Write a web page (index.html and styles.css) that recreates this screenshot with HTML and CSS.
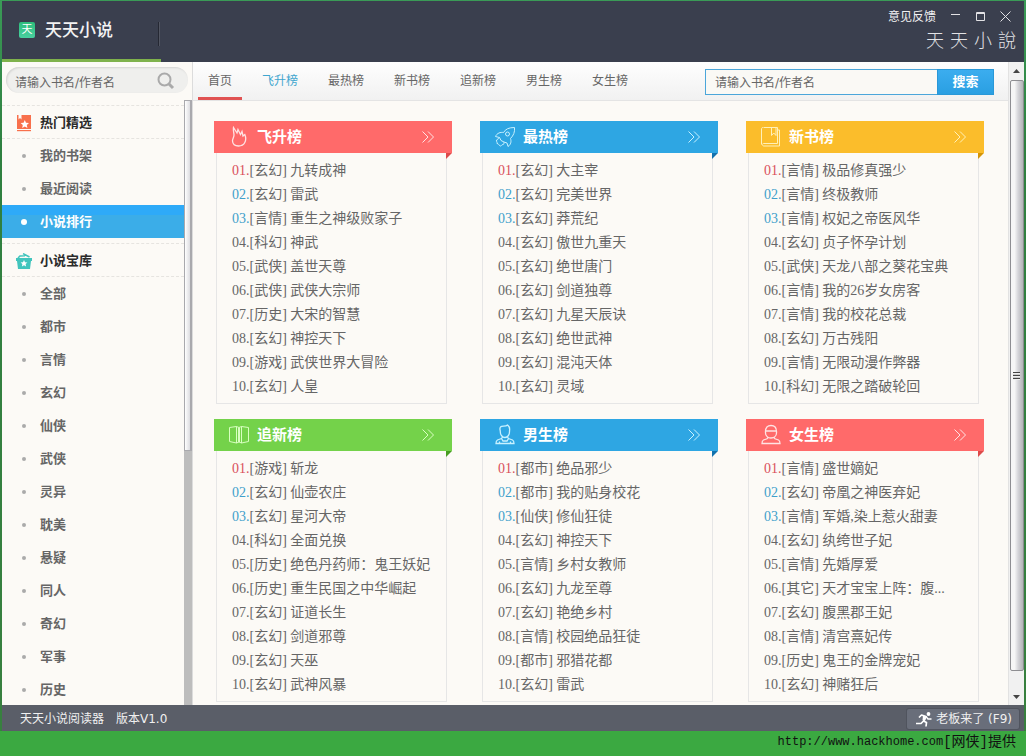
FILE: index.html
```html
<!DOCTYPE html>
<html lang="zh-CN">
<head>
<meta charset="utf-8">
<title>天天小说</title>
<link rel="stylesheet" href="styles.css">
</head>
<body>
<div class="app">
  <header class="titlebar">
    <div class="brand">
      <span class="brand-icon">天</span>
      <h1 class="brand-name">天天小说</h1>
    </div>
    <div class="title-right">
      <div class="window-tools">
        <a class="feedback" href="#">意见反馈</a>
        <button class="win-btn" aria-label="最小化"><svg width="11" height="11" viewBox="0 0 11 11"><path d="M1 3.5h9"/></svg></button>
        <button class="win-btn" aria-label="最大化"><svg width="11" height="11" viewBox="0 0 11 11"><path d="M1.5 1.5h8v8h-8zM1 2.5h9"/></svg></button>
        <button class="win-btn" aria-label="关闭"><svg width="11" height="11" viewBox="0 0 11 11"><path d="M.5 .5l10 10M10.500 .5l-10 10"/></svg></button>
      </div>
      <div class="seal"><span>天</span><span>天</span><span>小</span><span>說</span></div>
    </div>
  </header>

  <div class="body">
    <aside class="sidebar">
      <form class="side-search">
        <input class="side-input" type="text" aria-label="搜索小说" placeholder="请输入书名/作者名">
        <button class="side-submit" type="button" aria-label="查找"><svg width="18" height="18" viewBox="0 0 18 18"><circle cx="7.500" cy="7.500" r="6"/><path d="M12 12l4 4" stroke-width="3"/></svg></button>
      </form>
      <div class="side-scroll">
        <nav class="menu">
          <h2 class="menu-head"><svg class="menu-icon" width="16" height="17" viewBox="0 0 16 17"><path fill="#f8704c" d="M1 0h1.500v4.500L4 3l1.500 1.500V0H15v14H1z"/><path fill="#f8704c" d="M1 15h14v1.200H1z"/><path fill="#fff" d="M8.800 5l1.200 2.800 3 .3-2.200 2 .6 3-2.600-1.600-2.600 1.600.6-3-2.200-2 3-.3z"/></svg>热门精选</h2>
          <ul class="menu-list">
            <li><a class="menu-item" href="#">我的书架</a></li>
            <li><a class="menu-item" href="#">最近阅读</a></li>
            <li><a class="menu-item active" href="#">小说排行</a></li>
          </ul>
          <h2 class="menu-head"><svg class="menu-icon" width="16" height="17" viewBox="0 0 16 17"><path fill="#42c5bd" d="M0 5h16v3h-1l-1 8H2L1 8H0z"/><path fill="none" stroke="#42c5bd" stroke-width="1.600" d="M2 5l2-2 5-.2M7 .6L13.500 4"/><path fill="#fff" d="M8 7l1 2.200 2.400.2-1.800 1.600.5 2.400L8 12.200l-2.100 1.200.5-2.400-1.800-1.600L7 9.200z"/></svg>小说宝库</h2>
          <ul class="menu-list">
            <li><a class="menu-item" href="#">全部</a></li>
            <li><a class="menu-item" href="#">都市</a></li>
            <li><a class="menu-item" href="#">言情</a></li>
            <li><a class="menu-item" href="#">玄幻</a></li>
            <li><a class="menu-item" href="#">仙侠</a></li>
            <li><a class="menu-item" href="#">武侠</a></li>
            <li><a class="menu-item" href="#">灵异</a></li>
            <li><a class="menu-item" href="#">耽美</a></li>
            <li><a class="menu-item" href="#">悬疑</a></li>
            <li><a class="menu-item" href="#">同人</a></li>
            <li><a class="menu-item" href="#">奇幻</a></li>
            <li><a class="menu-item" href="#">军事</a></li>
            <li><a class="menu-item" href="#">历史</a></li>
          </ul>
        </nav>
        <div class="side-bar"><div class="side-thumb"></div></div>
      </div>
    </aside>

    <main class="main">
      <div class="topnav">
        <nav class="tabs">
          <a class="tab current" href="#">首页</a>
          <a class="tab hover" href="#">飞升榜</a>
          <a class="tab" href="#">最热榜</a>
          <a class="tab" href="#">新书榜</a>
          <a class="tab" href="#">追新榜</a>
          <a class="tab" href="#">男生榜</a>
          <a class="tab" href="#">女生榜</a>
        </nav>
        <form class="search">
          <input class="search-input" type="text" aria-label="书名或作者名" placeholder="请输入书名/作者名">
          <button class="search-btn" type="button">搜索</button>
        </form>
      </div>

      <div class="cards">
        <section class="card red">
          <h2 class="card-head"><svg class="card-icon bold" width="22" height="22" viewBox="0 0 22 22"><path d="M5.500 1.500L9 7l1-3.500 2.500 5 1.500-3 1 4.500 1.800-1.500c1 2.500 1.400 5.500 0 8-1.300 2.500-3.800 3.500-6.300 3.500-3.300 0-5.800-2-6-5-.1-2 1.500-3.500 1.500-6 0-2-1-4.500-.5-7.500z"/></svg>飞升榜<a class="more" href="#" aria-label="更多"><svg width="12" height="12" viewBox="0 0 12 12"><path d="M.5 .5l5.500 5.500-5.500 5.500M6 .5l5.500 5.500L6 11.500"/></svg></a></h2>
          <ol class="books">
            <li><span class="no first">01.</span>[玄幻] 九转成神</li>
            <li><span class="no top">02.</span>[玄幻] 雷武</li>
            <li><span class="no top">03.</span>[言情] 重生之神级败家子</li>
            <li><span class="no">04.</span>[科幻] 神武</li>
            <li><span class="no">05.</span>[武侠] 盖世天尊</li>
            <li><span class="no">06.</span>[武侠] 武侠大宗师</li>
            <li><span class="no">07.</span>[历史] 大宋的智慧</li>
            <li><span class="no">08.</span>[玄幻] 神控天下</li>
            <li><span class="no">09.</span>[游戏] 武侠世界大冒险</li>
            <li><span class="no">10.</span>[玄幻] 人皇</li>
          </ol>
        </section>

        <section class="card blue">
          <h2 class="card-head"><svg class="card-icon" width="22" height="22" viewBox="0 0 22 22"><path d="M20.500 1.500c-5.500 0-9 1.500-11 5-3-.5-6.500.5-8 4l4 1 1.500 3 3 1.500 3 1 1 3.500c3-2 3.500-5 2.500-8 3-3 4.500-6.500 4-11zM5.500 11.500c-2 .5-1 2.500-3 2.500-.5 1.500 1 2 .5 3.500 2 0 1.500 2 3.500 2.500 1 0 1-1.500 2.500-1.500 1 0 1-1.500 1-2.500"/><circle cx="13.500" cy="8" r="2"/></svg>最热榜<a class="more" href="#" aria-label="更多"><svg width="12" height="12" viewBox="0 0 12 12"><path d="M.5 .5l5.500 5.500-5.500 5.500M6 .5l5.500 5.500L6 11.500"/></svg></a></h2>
          <ol class="books">
            <li><span class="no first">01.</span>[玄幻] 大主宰</li>
            <li><span class="no top">02.</span>[玄幻] 完美世界</li>
            <li><span class="no top">03.</span>[玄幻] 莽荒纪</li>
            <li><span class="no">04.</span>[玄幻] 傲世九重天</li>
            <li><span class="no">05.</span>[玄幻] 绝世唐门</li>
            <li><span class="no">06.</span>[玄幻] 剑道独尊</li>
            <li><span class="no">07.</span>[玄幻] 九星天辰诀</li>
            <li><span class="no">08.</span>[玄幻] 绝世武神</li>
            <li><span class="no">09.</span>[玄幻] 混沌天体</li>
            <li><span class="no">10.</span>[玄幻] 灵域</li>
          </ol>
        </section>

        <section class="card yellow">
          <h2 class="card-head"><svg class="card-icon" width="22" height="22" viewBox="0 0 22 22"><path d="M3.500 1.500h14v16h-14c-1 0-1.500 1-1 1.700.3.600.7.800 1.200.8h15.800v-16h-2M1.500 18.500V3c0-1 .5-1.500 1.500-1.500M11.500 1.500v8l2.300-2.500L16 9.500v-8"/></svg>新书榜<a class="more" href="#" aria-label="更多"><svg width="12" height="12" viewBox="0 0 12 12"><path d="M.5 .5l5.500 5.500-5.500 5.500M6 .5l5.500 5.500L6 11.500"/></svg></a></h2>
          <ol class="books">
            <li><span class="no first">01.</span>[言情] 极品修真强少</li>
            <li><span class="no top">02.</span>[言情] 终极教师</li>
            <li><span class="no top">03.</span>[言情] 权妃之帝医风华</li>
            <li><span class="no">04.</span>[玄幻] 贞子怀孕计划</li>
            <li><span class="no">05.</span>[武侠] 天龙八部之葵花宝典</li>
            <li><span class="no">06.</span>[言情] 我的26岁女房客</li>
            <li><span class="no">07.</span>[言情] 我的校花总裁</li>
            <li><span class="no">08.</span>[玄幻] 万古残阳</li>
            <li><span class="no">09.</span>[言情] 无限动漫作弊器</li>
            <li><span class="no">10.</span>[科幻] 无限之踏破轮回</li>
          </ol>
        </section>

        <section class="card green">
          <h2 class="card-head"><svg class="card-icon" width="22" height="22" viewBox="0 0 22 22"><path d="M1.500 3.500l7-1 2.500 1 2.500-1 7 1v14l-7 1.500-2.500-1-2.500 1-7-1.500zM8.500 2.500V19M13.500 2.500V19M10.500 3.500V18M11.500 3.500V18"/></svg>追新榜<a class="more" href="#" aria-label="更多"><svg width="12" height="12" viewBox="0 0 12 12"><path d="M.5 .5l5.500 5.500-5.500 5.500M6 .5l5.500 5.500L6 11.500"/></svg></a></h2>
          <ol class="books">
            <li><span class="no first">01.</span>[游戏] 斩龙</li>
            <li><span class="no top">02.</span>[玄幻] 仙壶农庄</li>
            <li><span class="no top">03.</span>[玄幻] 星河大帝</li>
            <li><span class="no">04.</span>[科幻] 全面兑换</li>
            <li><span class="no">05.</span>[历史] 绝色丹药师：鬼王妖妃</li>
            <li><span class="no">06.</span>[历史] 重生民国之中华崛起</li>
            <li><span class="no">07.</span>[玄幻] 证道长生</li>
            <li><span class="no">08.</span>[玄幻] 剑道邪尊</li>
            <li><span class="no">09.</span>[玄幻] 天巫</li>
            <li><span class="no">10.</span>[玄幻] 武神风暴</li>
          </ol>
        </section>

        <section class="card blue">
          <h2 class="card-head"><svg class="card-icon bold" width="22" height="22" viewBox="0 0 22 22"><path d="M6.500 3c1.500-1.500 5 0 7-2 2 1.500 2.500 3.500 2 6 .3 4-2 6.500-4.500 6.500S6 11 6.300 7C5.800 5.500 5.800 4 6.500 3zM8.500 13L7.500 14.500 3.500 16C2.200 16.700 2 18 2 19.500h18c0-1.500-.2-2.800-1.500-3.500l-4-1.500-1-1.500M7.500 14.500l1.500 2.500h4l1.500-2.500M5.500 17.500v2M16.500 17.500v2"/></svg>男生榜<a class="more" href="#" aria-label="更多"><svg width="12" height="12" viewBox="0 0 12 12"><path d="M.5 .5l5.500 5.500-5.500 5.500M6 .5l5.500 5.500L6 11.500"/></svg></a></h2>
          <ol class="books">
            <li><span class="no first">01.</span>[都市] 绝品邪少</li>
            <li><span class="no top">02.</span>[都市] 我的贴身校花</li>
            <li><span class="no top">03.</span>[仙侠] 修仙狂徒</li>
            <li><span class="no">04.</span>[玄幻] 神控天下</li>
            <li><span class="no">05.</span>[言情] 乡村女教师</li>
            <li><span class="no">06.</span>[玄幻] 九龙至尊</li>
            <li><span class="no">07.</span>[玄幻] 艳绝乡村</li>
            <li><span class="no">08.</span>[言情] 校园绝品狂徒</li>
            <li><span class="no">09.</span>[都市] 邪猎花都</li>
            <li><span class="no">10.</span>[玄幻] 雷武</li>
          </ol>
        </section>

        <section class="card red">
          <h2 class="card-head"><svg class="card-icon bold" width="22" height="22" viewBox="0 0 22 22"><path d="M5.500 7.500C5.500 3.500 7.500 1.500 11 1.500s5.500 2 5.500 6v1.500c0 3-2.500 5-5.500 5s-5.500-2-5.500-5zM5.500 7h11M8 13.500l-1 1.300-3.500 1.200c-1.200.5-1.500 1.500-1.500 3.500h18c0-2-.3-3-1.500-3.500L15 14.800l-1-1.300"/></svg>女生榜<a class="more" href="#" aria-label="更多"><svg width="12" height="12" viewBox="0 0 12 12"><path d="M.5 .5l5.500 5.500-5.500 5.500M6 .5l5.500 5.500L6 11.500"/></svg></a></h2>
          <ol class="books">
            <li><span class="no first">01.</span>[言情] 盛世嫡妃</li>
            <li><span class="no top">02.</span>[玄幻] 帝凰之神医弃妃</li>
            <li><span class="no top">03.</span>[言情] 军婚,染上惹火甜妻</li>
            <li><span class="no">04.</span>[玄幻] 纨绔世子妃</li>
            <li><span class="no">05.</span>[言情] 先婚厚爱</li>
            <li><span class="no">06.</span>[其它] 天才宝宝上阵：腹...</li>
            <li><span class="no">07.</span>[玄幻] 腹黑郡王妃</li>
            <li><span class="no">08.</span>[言情] 清宫熹妃传</li>
            <li><span class="no">09.</span>[历史] 鬼王的金牌宠妃</li>
            <li><span class="no">10.</span>[玄幻] 神赌狂后</li>
          </ol>
        </section>
      </div>
    </main>

    <div class="scrollbar">
      <svg class="arrow" width="7" height="4" viewBox="0 0 7 4"><path d="M0 4L3.500 0 7 4z"/></svg>
      <div class="thumb"><span class="grip"></span></div>
      <svg class="arrow" width="7" height="4" viewBox="0 0 7 4"><path d="M0 0l3.500 4L7 0z"/></svg>
    </div>
  </div>

  <footer class="statusbar">
    <span class="app-name">天天小说阅读器</span><span>版本V1.0</span>
    <button class="boss"><svg width="16" height="15" viewBox="0 0 16 15"><circle cx="12.500" cy="2" r="1.900" fill="#fff"/><path fill="none" stroke="#fff" stroke-width="1.700" stroke-linejoin="round" d="M3 5.500L5.500 3l4.500 1.500-2.500 4.500 3 1.500-.5 4M7.500 9L5 11.500H0"/><path fill="none" stroke="#fff" stroke-width="1.400" d="M10 4.500l2 2.500h3.500"/><path fill="#fff" d="M7 3.500l3.500 1L9 9 6.500 8z"/></svg>老板来了 (F9)</button>
  </footer>
</div>
<div class="credit"><span class="url">http://www.hackhome.com</span><span>[网侠]提供</span></div>
</body>
</html>
```

FILE: styles.css
```css
* { box-sizing: border-box; }
html, body { height: 100%; }
body {
  margin: 0;
  display: flex;
  flex-direction: column;
  overflow: hidden;
  background: #3ba941;
  color: #666;
  font: 12px/16px "DejaVu Sans", "Noto Sans CJK SC", sans-serif;
}
h1, h2, ul, ol { margin: 0; padding: 0; font-weight: normal; list-style: none; }
a { color: inherit; text-decoration: none; }
button { border: 0; padding: 0; background: none; color: inherit; font: inherit; }
input { font: inherit; color: #666; outline: 0; min-width: 0; }
input::placeholder { color: #666; opacity: 1; }
svg { display: block; flex: none; }

.app {
  flex: 1;
  min-height: 0;
  display: flex;
  flex-direction: column;
  padding: 1px 2px 0;
  background: linear-gradient(#3a9b57, #2f8040 20%, #38803f);
}

/* title bar */
.titlebar {
  flex: none;
  display: flex;
  justify-content: space-between;
  height: 61px;
  background: #3a3f4e;
  color: #f2f2f2;
}
.brand {
  position: relative;
  display: flex;
  align-items: center;
  gap: 10px;
  width: 159px;
  padding: 0 0 0 17px;
  border-bottom: 3px solid #7fb24c;
}
.brand::after {
  content: "";
  position: absolute;
  right: 1px;
  top: 21px;
  width: 2px;
  height: 24px;
  background: linear-gradient(90deg, #252833 50%, #525662 50%);
}
.brand-icon {
  width: 16px;
  height: 16px;
  border-radius: 2px;
  background: linear-gradient(#2ebd7c, #49d0a0);
  color: #fff;
  font-size: 11px;
  line-height: 16px;
  text-align: center;
}
.brand-name { font-size: 17px; line-height: 24px; font-weight: 500; }
.title-right {
  display: flex;
  flex-direction: column;
  align-items: flex-end;
  padding: 6px 8px 0 0;
}
.window-tools { display: flex; align-items: center; gap: 14px; padding-right: 5px; }
.feedback { padding-top: 2px; }
.win-btn svg { fill: none; stroke: #e2e2e5; stroke-width: 1; }
.seal {
  display: flex;
  gap: 6px;
  padding-top: 4px;
  font-size: 18px;
  line-height: 24px;
  font-weight: 300;
  color: #e2e3e6;
}

/* body */
.body { flex: 1; min-height: 0; display: flex; background: #fcfaf6; }

.sidebar {
  flex: none;
  display: flex;
  flex-direction: column;
  width: 191px;
  border-right: 1px solid #dcdcdc;
}
.side-search {
  flex: none;
  display: flex;
  align-items: center;
  height: 26px;
  margin: 5px 4px 7px;
  padding: 2px 13px 0 9px;
  border-radius: 13px;
  background: #efefed;
  box-shadow: inset 1px 1px 2px #d4d4d2;
}
.side-input { flex: 1; border: 0; padding: 3px 0 0; background: none; }
.side-submit svg { fill: none; stroke: #aaa; stroke-width: 2; }
.side-scroll { flex: 1; min-height: 0; display: flex; }
.menu { flex: 1; overflow: hidden; }
.menu-head {
  display: flex;
  align-items: center;
  gap: 8px;
  height: 34px;
  margin-top: 5px;
  padding: 2px 0 0 14px;
  border: dashed #e6e4e0;
  border-width: 1px 0;
  color: #2b2b2b;
  font-size: 13px;
  font-weight: bold;
}
.menu-item {
  display: flex;
  align-items: center;
  height: 33px;
  padding: 1px 0 0 20px;
  font-size: 13px;
  font-weight: bold;
}
.menu-item::before {
  content: "";
  width: 4px;
  height: 4px;
  margin-right: 14px;
  border-radius: 50%;
  background: #aaa;
}
.menu-item.active {
  background: linear-gradient(#2eaaf8 30%, #3bade8 30%);
  color: #fff;
}
.menu-item.active::before { background: #fff; box-shadow: 0 0 0 1px #fff; }
.side-bar {
  flex: none;
  width: 8px;
  background: #bdbdbd;
}
.side-thumb {
  height: 58%;
  border: 1px solid #a9a9ad;
  border-right-width: 2px;
  background: linear-gradient(90deg, #fff, #dcdce0);
}

/* content */
.main { flex: 1; min-width: 0; overflow: hidden; }
.topnav {
  display: flex;
  justify-content: space-between;
  height: 39px;
  padding: 0 14px 0 5px;
  border-bottom: 1px solid #e4e4e4;
  background: linear-gradient(#fefefe, #f1f1f1);
}
.tabs { display: flex; gap: 10px; }
.tab {
  padding: 11px 10px 8px;
  border-bottom: 3px solid transparent;
  white-space: nowrap;
}
.tab.current { border-color: #e05252; }
.tab.hover { color: #3fa6cf; }
.search { display: flex; height: 26px; margin-top: 7px; }
.search-input {
  width: 232px;
  padding: 2px 9px 0;
  border: 1px solid #4ba6da;
  border-right: 0;
  background: #faf9f5;
}
.search-btn {
  width: 57px;
  background: linear-gradient(#3badef, #2a9fe2);
  border: 1px solid #2998d8;
  color: #fff;
  font-size: 13px;
  font-weight: bold;
}

.cards {
  display: grid;
  grid-template-columns: repeat(3, minmax(0, 1fr));
  gap: 15px 28px;
  padding: 20px 24px 3px 21px;
}
.card { --tone: #ff6a6a; --fold: #dc4a4a; --ink: #ffe3e3; }
.card.blue { --tone: #2ea6e3; --fold: #1272ae; --ink: #c8f1ff; }
.card.yellow { --tone: #fbbd2b; --fold: #d49508; --ink: #fff0b8; }
.card.green { --tone: #74d24a; --fold: #479c22; --ink: #d8ffc0; }
.card-head {
  position: relative;
  display: flex;
  align-items: center;
  gap: 7px;
  height: 32px;
  padding: 0 18px 0 14px;
  background: var(--tone);
  color: #fff;
  font-size: 15px;
  line-height: 20px;
  font-weight: bold;
}
.card-head::after {
  content: "";
  position: absolute;
  right: 0;
  top: 100%;
  border-top: 6px solid var(--fold);
  border-right: 6px solid transparent;
}
.card-icon { fill: none; stroke: var(--ink); stroke-width: 1; }
.card-icon.bold { stroke-width: 1.3; }
.more { margin-left: auto; }
.more svg { fill: none; stroke: var(--ink); stroke-width: 1; }
.books {
  margin: 0 5px 0 2px;
  padding: 6px 0 4px 15px;
  border: 1px solid #e6e6e6;
  border-top: 0;
  font-family: "Liberation Serif", "Noto Sans CJK SC", sans-serif;
  font-size: 14px;
  line-height: 24px;
}
.books li { height: 24px; white-space: nowrap; overflow: hidden; }
.no.first { color: #d9505c; }
.no.top { color: #3f9fcb; }

/* main scrollbar */
.scrollbar {
  flex: none;
  display: flex;
  flex-direction: column;
  align-items: center;
  gap: 7px;
  width: 16px;
  padding: 7px 0 6px;
  border-left: 1px solid #e2e2e2;
  background: #f1f1f1;
}
.arrow { fill: #444; }
.thumb {
  flex: 1;
  display: flex;
  align-items: center;
  justify-content: center;
  width: 14px;
  margin-bottom: 17px;
  border: 1px solid #8e8e92;
  border-radius: 2px;
  background: linear-gradient(90deg, #f6f6f6 30%, #d4d4d8 60%, #b4b4b8);
}
.grip {
  width: 7px;
  height: 8px;
  background: repeating-linear-gradient(#444 0 1px, #eee 1px 2px, #ccc 2px 3px);
}

/* status bar */
.statusbar {
  flex: none;
  display: flex;
  align-items: center;
  gap: 12px;
  height: 26px;
  padding: 2px 5px 0 18px;
  background: #5a5e68;
  color: #f0f0f0;
}
.boss {
  display: flex;
  align-items: center;
  gap: 4px;
  height: 20px;
  margin-left: auto;
  padding: 0 7px 0 9px;
  border-radius: 2px;
  background: #696e7a;
  box-shadow: 0 0 0 1px #50545e;
}
.credit {
  flex: none;
  display: flex;
  align-items: center;
  justify-content: flex-end;
  height: 25px;
  padding: 0 10px 4px 0;
  color: #111;
  font-family: "Liberation Mono", "Noto Sans CJK SC", monospace;
  font-size: 14px;
}
.url { font-size: 12px; }
```
